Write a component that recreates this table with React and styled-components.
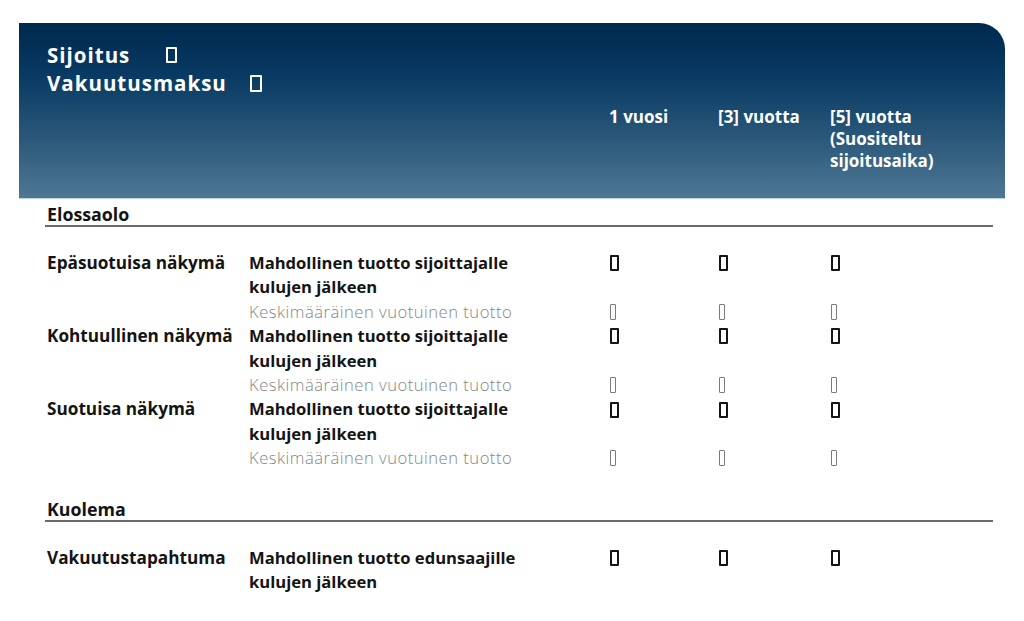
import styled, { createGlobalStyle } from 'styled-components';

const GlobalStyle = createGlobalStyle`
    html, body {
        margin: 0;
        padding: 0;
        background: #ffffff;
    }
    body {
        font-family: "Open Sans", Lato, "Liberation Sans", sans-serif;
        color: #141414;
    }
`;

const COLS = '202px 360px 109px 112px 1fr';
const LINE = 24.4;

const scenarios = [
    { label: 'Epäsuotuisa näkymä' },
    { label: 'Kohtuullinen näkymä' },
    { label: 'Suotuisa näkymä' },
];

export default function App() {
    return (
        <>
            <GlobalStyle />
            <Page>
                <Table>
                    <Header>
                        <TitleBlock>
                            <TitleLine>
                                Sijoitus
                                <Gap $w={36} />
                                <Tofu $w={11} $h={16} $b={2.5} $color="#ffffff" />
                            </TitleLine>
                            <TitleLine>
                                Vakuutusmaksu
                                <Gap $w={23} />
                                <Tofu $w={12} $h={17} $b={2.5} $color="#ffffff" />
                            </TitleLine>
                        </TitleBlock>
                        <ColHead>1 vuosi</ColHead>
                        <ColHead>[3] vuotta</ColHead>
                        <ColHead>
                            [5] vuotta
                            <br />
                            (Suositeltu
                            <br />
                            sijoitusaika)
                        </ColHead>
                    </Header>

                    <Body>
                        <SectionTitle>Elossaolo</SectionTitle>
                        <Rows>
                            {scenarios.map((s) => (
                                <ScenarioRow key={s.label}>
                                    <RowLabel>{s.label}</RowLabel>
                                    <Desc>
                                        <BoldText>
                                            Mahdollinen tuotto sijoittajalle
                                            <br />
                                            kulujen jälkeen
                                        </BoldText>
                                        <LightText>Keskimääräinen vuotuinen tuotto</LightText>
                                    </Desc>
                                    {[0, 1, 2].map((i) => (
                                        <ValueCell key={i}>
                                            <Tofu $w={9} $h={16} $b={2.5} $color="#151515" />
                                            <span />
                                            <Tofu $w={6} $h={16} $b={1.2} $color="#7a7a7a" />
                                        </ValueCell>
                                    ))}
                                </ScenarioRow>
                            ))}
                        </Rows>

                        <SectionTitle $top={27}>Kuolema</SectionTitle>
                        <Rows>
                            <ScenarioRow>
                                <RowLabel>Vakuutustapahtuma</RowLabel>
                                <Desc>
                                    <BoldText>
                                        Mahdollinen tuotto edunsaajille
                                        <br />
                                        kulujen jälkeen
                                    </BoldText>
                                </Desc>
                                {[0, 1, 2].map((i) => (
                                    <ValueCell key={i}>
                                        <Tofu $w={9} $h={16} $b={2.5} $color="#151515" />
                                    </ValueCell>
                                ))}
                            </ScenarioRow>
                        </Rows>
                    </Body>
                </Table>
            </Page>
        </>
    );
}

const Page = styled.div`
    width: 1024px;
    height: 621px;
    padding: 23px 19px 0 19px;
    box-sizing: border-box;
    overflow: hidden;
`;

const Table = styled.div`
    width: 986px;
    display: flex;
    flex-direction: column;
`;

const Header = styled.div`
    display: grid;
    grid-template-columns: ${COLS};
    align-items: start;
    height: 176px;
    box-sizing: border-box;
    padding: 18px 0 0 28px;
    border-top-right-radius: 26px;
    background: linear-gradient(180deg, #00284e 0%, #083a63 30%, #2a5779 65%, #4e7794 100%);
    border-bottom: 1px solid #b9d2e4;
    color: #ffffff;
`;

const TitleBlock = styled.div`
    grid-column: 1 / 3;
    grid-row: 1;
    display: flex;
    flex-direction: column;
    font-size: 20.5px;
    font-weight: 700;
    line-height: 28px;
    letter-spacing: 1px;
`;

const TitleLine = styled.div`
    display: flex;
    align-items: center;
`;

const Gap = styled.span`
    display: inline-block;
    width: ${(p) => p.$w}px;
`;

const ColHead = styled.div`
    grid-row: 1;
    padding-top: 65px;
    font-size: 17px;
    font-weight: 700;
    line-height: 22px;
`;

const Body = styled.div`
    display: flex;
    flex-direction: column;
    padding: 0 12px 0 26px;
`;

const SectionTitle = styled.div`
    margin-top: ${(p) => p.$top ?? 4}px;
    padding-left: 2px;
    font-size: 17.8px;
    font-weight: 700;
    line-height: 22px;
    border-bottom: 2px solid #6a6a6a;
`;

const Rows = styled.div`
    display: flex;
    flex-direction: column;
    padding-top: 24px;
`;

const ScenarioRow = styled.div`
    display: grid;
    grid-template-columns: ${COLS};
    padding-left: 2px;
    font-size: 16.6px;
    line-height: ${LINE}px;
`;

const RowLabel = styled.div`
    font-size: 17.2px;
    font-weight: 700;
`;

const Desc = styled.div`
    display: flex;
    flex-direction: column;
`;

const BoldText = styled.div`
    font-weight: 700;
`;

const LightText = styled.div`
    font-weight: 300;
    color: #858585;
    letter-spacing: 0.5px;
`;

const ValueCell = styled.div`
    display: grid;
    grid-template-rows: repeat(3, ${LINE}px);
    align-items: center;
    justify-items: start;
    padding-left: 1px;
`;

const Tofu = styled.span`
    display: inline-block;
    width: ${(p) => p.$w}px;
    height: ${(p) => p.$h}px;
    box-sizing: border-box;
    border: ${(p) => p.$b}px solid ${(p) => p.$color};
    border-radius: 1px;
`;
